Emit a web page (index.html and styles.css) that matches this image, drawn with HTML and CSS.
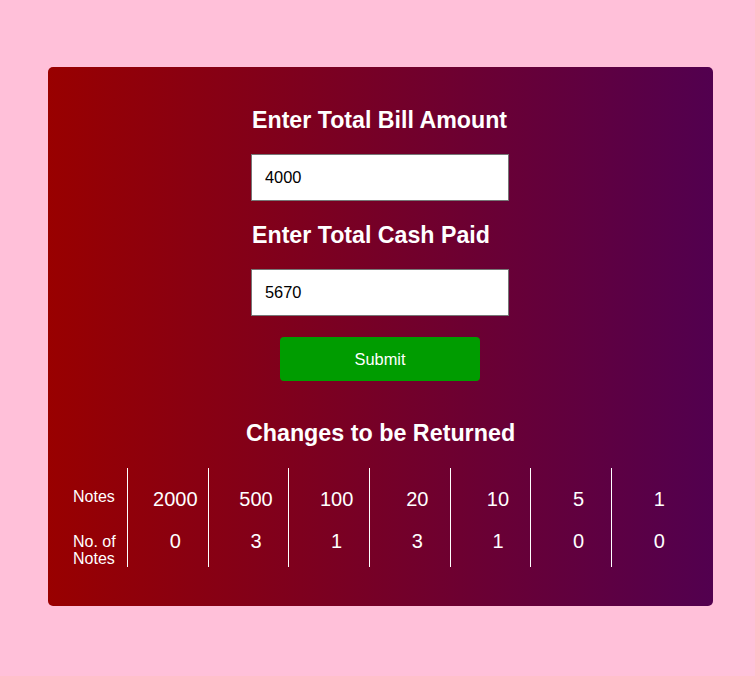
FILE: index.html
```html
<!DOCTYPE html>
<html lang="en">
<head>
<meta charset="utf-8">
<title>Cash Register</title>
<link rel="stylesheet" href="styles.css">
</head>
<body>
<main class="card">
  <section class="form">
    <label class="heading" for="bill">Enter Total Bill Amount</label>
    <input class="field" id="bill" type="text" value="4000">
    <label class="heading" for="cash">Enter Total Cash Paid</label>
    <input class="field" id="cash" type="text" value="5670">
  </section>
  <button class="submit" type="button">Submit</button>
  <h2 class="result-title">Changes to be Returned</h2>
  <div class="table">
    <div class="cell label r1">Notes</div>
    <div class="cell num r1">2000</div>
    <div class="cell num r1">500</div>
    <div class="cell num r1">100</div>
    <div class="cell num r1">20</div>
    <div class="cell num r1">10</div>
    <div class="cell num r1">5</div>
    <div class="cell num r1">1</div>
    <div class="cell label r2">No. of Notes</div>
    <div class="cell num r2">0</div>
    <div class="cell num r2">3</div>
    <div class="cell num r2">1</div>
    <div class="cell num r2">3</div>
    <div class="cell num r2">1</div>
    <div class="cell num r2">0</div>
    <div class="cell num r2">0</div>
  </div>
</main>
</body>
</html>
```
FILE: styles.css
```css
* { box-sizing: border-box; }
html, body { margin: 0; padding: 0; }
body {
  background: #ffc0d9;
  font-family: "Liberation Sans", Arial, sans-serif;
  width: 755px;
  height: 676px;
  padding-top: 67px;
}
.card {
  margin-left: 48px;
  width: 665px;
  height: 539px;
  border-radius: 5px;
  background: linear-gradient(to right, #990000, #52004f);
  padding-top: 40px;
  display: flex;
  flex-direction: column;
  align-items: center;
  color: #fff;
}
.form {
  width: 258px;
  display: flex;
  flex-direction: column;
  margin-right: 1px;
}
.heading {
  font-size: 23.2px;
  font-weight: bold;
  line-height: 27px;
  padding-left: 1px;
  margin-bottom: 20px;
}
.field {
  width: 258px;
  height: 47px;
  border: 1px solid #767676;
  background: #fff;
  padding: 0 0 0 13px;
  font-family: "Liberation Sans", Arial, sans-serif;
  font-size: 16.4px;
  color: #000;
  margin-bottom: 21px;
  outline: none;
}
.form .field:last-child { margin-bottom: 0; }
.submit {
  margin-top: 21px;
  margin-right: 1px;
  width: 200px;
  height: 44px;
  border: none;
  border-radius: 4px;
  background: #009c00;
  color: #fff;
  font-family: "Liberation Sans", Arial, sans-serif;
  font-size: 16.4px;
}
.result-title {
  margin: 39px 0 0 0;
  font-size: 23.3px;
  font-weight: bold;
  line-height: 27px;
}
.table {
  margin-top: 21px;
  align-self: flex-start;
  margin-left: 17px;
  display: grid;
  grid-template-columns: 62px repeat(7, 80.67px);
  grid-template-rows: 52px 47px;
}
.cell { white-space: nowrap; }
.label {
  font-size: 16px;
  line-height: 17px;
  padding-left: 8px;
  white-space: normal;
}
.num {
  border-left: 1px solid #fff;
  font-size: 20px;
  line-height: 23px;
  text-align: center;
  padding-left: 15px;
}
.label.r1 { padding-top: 20px; line-height: 18px; }
.num.r1 { padding-top: 20px; }
.label.r2 { padding-top: 13px; width: 58px; }
.num.r2 { padding-top: 10px; }
```
